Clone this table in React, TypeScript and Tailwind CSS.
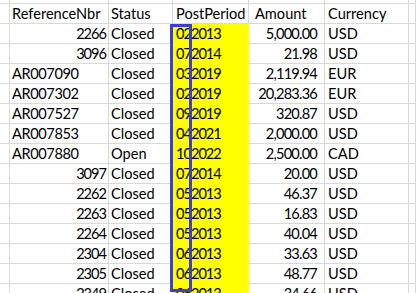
import React from "react";

type Row = [string, string, string, string, string];

const rows: Row[] = [
  ["2266", "Closed", "022013", "5,000.00", "USD"],
  ["3096", "Closed", "072014", "21.98", "USD"],
  ["AR007090", "Closed", "032019", "2,119.94", "EUR"],
  ["AR007302", "Closed", "022019", "20,283.36", "EUR"],
  ["AR007527", "Closed", "092019", "320.87", "USD"],
  ["AR007853", "Closed", "042021", "2,000.00", "USD"],
  ["AR007880", "Open", "102022", "2,500.00", "CAD"],
  ["3097", "Closed", "072014", "20.00", "USD"],
  ["2262", "Closed", "052013", "46.37", "USD"],
  ["2263", "Closed", "052013", "16.83", "USD"],
  ["2264", "Closed", "052013", "40.04", "USD"],
  ["2304", "Closed", "062013", "33.63", "USD"],
  ["2305", "Closed", "062013", "48.77", "USD"],
  ["2349", "Closed", "062013", "34.66", "USD"],
];

const cell = "h-[20px] border-r border-b border-[#d9d9d9] leading-[19px] whitespace-nowrap overflow-hidden";

export default function App() {
  return (
    <div
      className="relative w-[416px] h-[293px] overflow-hidden bg-white text-[14.6px] text-black"
      style={{ fontFamily: "Lato, 'Open Sans', sans-serif" }}
    >
      <div className="grid grid-cols-[10px_99px_64px_76px_76px_84px_1fr]">
        {/* partial row above header */}
        {Array.from({ length: 7 }).map((_, i) => (
          <div key={"f" + i} className="h-[4px] border-r border-b border-[#d9d9d9]" />
        ))}
        {/* header */}
        <div className={cell} />
        <div className={cell + " pl-[2px]"}>ReferenceNbr</div>
        <div className={cell + " pl-[2px]"}>Status</div>
        <div className={cell + " pl-[3px]"}>PostPeriod</div>
        <div className={cell + " pl-[6px]"}>Amount</div>
        <div className={cell + " pl-[3px]"}>Currency</div>
        <div className={cell} />
        {rows.map((r, i) => {
          const numeric = /^\d+$/.test(r[0]);
          return (
            <React.Fragment key={i}>
              <div className={cell} />
              <div className={cell + (numeric ? " text-right pr-[2px] tracking-[-1px]" : " pl-[2px] tracking-[-0.4px]")}>{r[0]}</div>
              <div className={cell + " pl-[2px]"}>{r[1]}</div>
              <div className="h-[20px] border-r border-b border-[#ffff00] bg-[#ffff00] leading-[19px] pl-[3px] whitespace-nowrap tracking-[-1px]">
                {r[2]}
              </div>
              <div className={cell + " text-right pr-[7px] tracking-[-0.8px]"}>{r[3]}</div>
              <div className={cell + " pl-[3px]"}>{r[4]}</div>
              <div className={cell} />
            </React.Fragment>
          );
        })}
      </div>
      <div className="absolute left-[170px] top-[24px] w-[22px] h-[268px] border-[3px] border-[#3f3fcf]" />
    </div>
  );
}
